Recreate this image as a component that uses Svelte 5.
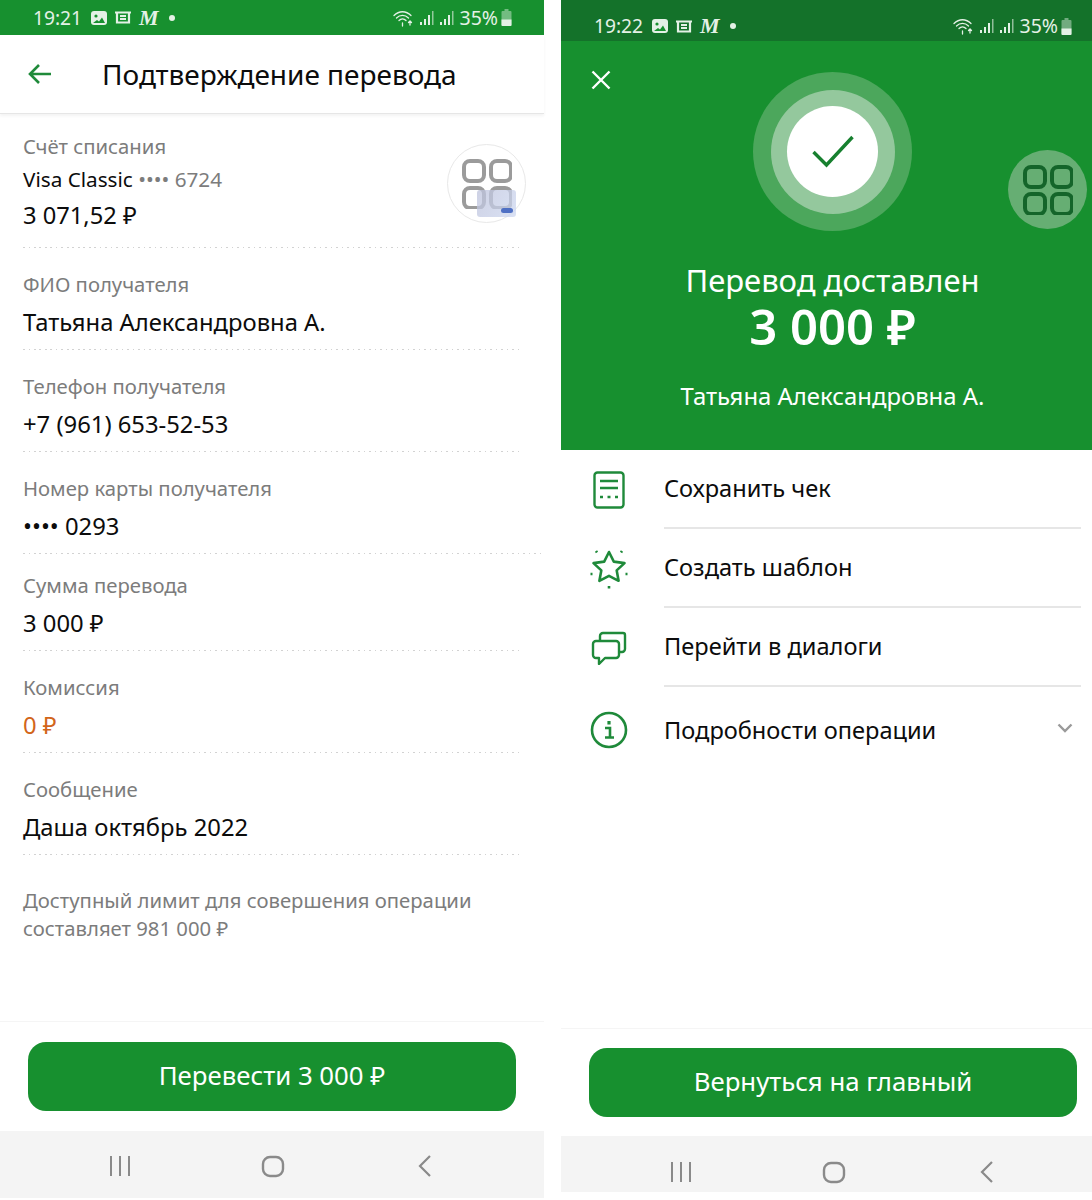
<script>
  const rows = [
    { label: "ФИО получателя", value: "Татьяна Александровна А." },
    { label: "Телефон получателя", value: "+7 (961) 653-52-53" },
    { label: "Номер карты получателя", value: "•••• 0293", wide: true },
    { label: "Сумма перевода", value: "3 000 ₽", tight: true },
    { label: "Комиссия", value: "0 ₽", accent: true },
    { label: "Сообщение", value: "Даша октябрь 2022" },
  ];

  const actions = ["Сохранить чек", "Создать шаблон", "Перейти в диалоги"];
</script>

{#snippet statusBar(time, dark)}
  <div class="status" class:dark>
    <div class="status-left">
      <span class="clock">{time}</span>
      <svg width="16" height="14" viewBox="0 0 16 14"><rect width="16" height="14" rx="3" fill="currentColor" /><circle cx="5" cy="5" r="1.6" fill="#17902f" /><path d="M2 12l4-3 2 1.500 3-4 3 5.500z" fill="#17902f" /></svg>
      <svg width="16" height="13" viewBox="0 0 16 13" class="news"><path d="M0 1.500h16M2 1.500v10h12v-10M5 5h6M5 8h6" fill="none" stroke="currentColor" stroke-width="2.200" /></svg>
      <span class="logo">M</span>
      <span class="dot"></span>
    </div>
    <div class="status-right">
      <svg width="23" height="18" viewBox="0 0 23 18" fill="none" stroke="currentColor" stroke-width="1.300" stroke-linecap="round"><path d="M1 6.500c5-5 12-5 17 0M3.500 9c3.500-3.400 8.500-3.400 12 0M6 11.500c2-2 5-2 7 0" /><path d="M9.500 14v3M9.500 14v.1M17 16v-4M15.500 13.500l1.500-1.500 1.500 1.500" /></svg>
      <svg width="17" height="16" viewBox="0 0 17 16" fill="currentColor"><rect x="1" y="12" width="2" height="3" /><rect x="5" y="9" width="2" height="6" /><rect x="9" y="5" width="2" height="10" /><rect x="13" y="1" width="1.500" height="14" opacity=".6" /></svg>
      <svg width="17" height="16" viewBox="0 0 17 16" fill="currentColor"><rect x="1" y="12" width="2" height="3" /><rect x="5" y="9" width="2" height="6" /><rect x="9" y="5" width="2" height="10" /><rect x="13" y="1" width="1.500" height="14" opacity=".6" /></svg>
      <span class="percent">35%</span>
      <svg width="11" height="17" viewBox="0 0 11 17"><path d="M3.500 0h4v2h2a1 1 0 0 1 1 1v13a1 1 0 0 1-1 1h-8a1 1 0 0 1-1-1V3a1 1 0 0 1 1-1h2z" fill="currentColor" opacity=".45" /><path d="M.5 10.500h10V16a1 1 0 0 1-1 1h-8a1 1 0 0 1-1-1z" fill="currentColor" /></svg>
    </div>
  </div>
{/snippet}

{#snippet navBar()}
  <div class="nav">
    <svg width="24" height="24" viewBox="0 0 24 24" fill="none" stroke="#8a8a8a" stroke-width="2"><path d="M3 2v20M12 2v20M21 2v20" /></svg>
    <svg width="24" height="24" viewBox="0 0 24 24" fill="none" stroke="#8a8a8a" stroke-width="2.400"><rect x="2" y="3" width="20" height="19" rx="7" /></svg>
    <svg width="24" height="24" viewBox="0 0 24 24" fill="none" stroke="#8a8a8a" stroke-width="2.200"><path d="M17 2L7 12l10 10" /></svg>
  </div>
{/snippet}

{#snippet gridIcon(color)}
  <svg width="50" height="50" viewBox="0 0 50 50" fill="none" stroke={color} stroke-width="4">
    <rect x="2" y="2" width="20" height="20" rx="6" />
    <rect x="29" y="2" width="20" height="20" rx="6" />
    <rect x="2" y="29" width="20" height="20" rx="6" />
    <rect x="29" y="29" width="20" height="20" rx="6" />
  </svg>
{/snippet}

<div class="page">
  <section class="phone left">
    {@render statusBar("19:21", false)}
    <header class="topbar">
      <svg class="back" width="26" height="24" viewBox="0 0 26 24" fill="none" stroke="#1f8a3a" stroke-width="2.600"><path d="M24 12H3M12 3l-9 9 9 9" /></svg>
      <h1>Подтверждение перевода</h1>
    </header>

    <div class="details">
      <div class="row first">
        <div class="label">Счёт списания</div>
        <div class="card">Visa Classic <span class="muted">•••• 6724</span></div>
        <div class="value balance">3 071,52 ₽</div>
        <div class="float-btn">
          {@render gridIcon("#9b9b9b")}
          <span class="card-chip"><span class="card-pill"></span></span>
        </div>
      </div>
      {#each rows as row}
        <div class="row" class:wide={row.wide} class:tight={row.tight}>
          <div class="label">{row.label}</div>
          <div class="value" class:accent={row.accent}>{row.value}</div>
        </div>
      {/each}
      <p class="limit">Доступный лимит для совершения операции<br />составляет 981 000 ₽</p>
    </div>

    <div class="footer">
      <button class="primary">Перевести 3 000 ₽</button>
    </div>
    {@render navBar()}
  </section>

  <section class="phone right">
    {@render statusBar("19:22", true)}
    <div class="hero">
      <svg class="close" width="20" height="20" viewBox="0 0 20 20" fill="none" stroke="#fff" stroke-width="2.400"><path d="M1.500 1.500l17 17M18.500 1.500l-17 17" /></svg>
      <div class="ring-outer">
        <div class="ring-mid">
          <div class="ring-inner">
            <svg width="42" height="34" viewBox="0 0 42 34" fill="none" stroke="#17802f" stroke-width="3.400"><path d="M1.500 17l13 13L40.500 2" /></svg>
          </div>
        </div>
      </div>
      <div class="float-btn on-green">{@render gridIcon("#14652a")}</div>
      <div class="hero-title">Перевод доставлен</div>
      <div class="hero-amount">3 000 ₽</div>
      <div class="hero-name">Татьяна Александровна А.</div>
    </div>

    <ul class="actions">
      {#each actions as action, i}
        <li class="action">
          <span class="action-icon">
            {#if i === 0}
              <svg width="32" height="38" viewBox="0 0 32 38" fill="none" stroke="#1f8a3a" stroke-width="2.400"><rect x="1.500" y="1.500" width="29" height="35" rx="3" /><path d="M7 10h18M7 17h18" /><path d="M7 26h3M14.500 26h3M22 26h3" /></svg>
            {:else if i === 1}
              <svg width="38" height="40" viewBox="0 0 38 40" fill="none" stroke="#1f8a3a" stroke-width="2.600" stroke-linejoin="round"><path d="M19 3l4.800 9.600 10.700 1.500-7.800 7.300 1.900 10.400-9.600-5-9.600 5 1.900-10.400-7.800-7.300 10.700-1.500z" /><path d="M6 2l1 1.500M32 2l-1 1.500M.5 25h2M35.500 25h2M19 37v2.500" /></svg>
            {:else}
              <svg width="36" height="34" viewBox="0 0 36 34" fill="none" stroke="#1f8a3a" stroke-width="2.400" stroke-linejoin="round"><path d="M2 13a3 3 0 0 1 3-3h20a3 3 0 0 1 3 3v11a3 3 0 0 1-3 3H14l-6 6v-6H5a3 3 0 0 1-3-3z" /><path d="M9 10V5a3 3 0 0 1 3-3h20a2 2 0 0 1 2 2v14a3 3 0 0 1-3 3h-3" /></svg>
            {/if}
          </span>
          <span class="action-text">{action}</span>
        </li>
      {/each}
      <li class="action last">
        <span class="action-icon">
          <svg width="38" height="38" viewBox="0 0 38 38" fill="none" stroke="#1f8a3a" stroke-width="2.600"><circle cx="19" cy="19" r="17" /><path d="M15 17h5v9M15 26.500h9" /><path d="M19 10v3.500" stroke-width="3.200" /></svg>
        </span>
        <span class="action-text">Подробности операции</span>
        <svg class="chevron" width="16" height="10" viewBox="0 0 16 10" fill="none" stroke="#9a9a9a" stroke-width="2.400"><path d="M1.500 1.500L8 8l6.500-6.500" /></svg>
      </li>
    </ul>

    <div class="footer">
      <button class="primary">Вернуться на главный</button>
    </div>
    {@render navBar()}
  </section>
</div>

<style>
  :global(body) {
    background: #fff;
  }

  .page {
    display: flex;
    gap: 17px;
    width: 1092px;
    height: 1200px;
    overflow: hidden;
    font-family: "Noto Sans", "Open Sans", sans-serif;
    color: #0c0c0c;
  }

  .phone {
    position: relative;
    display: flex;
    flex-direction: column;
    background: #fff;
  }

  .phone.left {
    width: 544px;
    height: 1198px;
  }

  .phone.right {
    width: 531px;
    height: 1192px;
  }

  .status {
    flex: none;
    display: flex;
    align-items: center;
    justify-content: space-between;
    height: 35px;
    padding: 0 32px 0 33px;
    background: #17902f;
    color: #e4f1e6;
  }

  .status.dark {
    height: 41px;
    padding: 11px 20px 0 33px;
    box-sizing: border-box;
    background: #14722a;
  }

  .status-left,
  .status-right {
    display: flex;
    align-items: center;
  }

  .status-left {
    gap: 8px;
  }

  .status-right {
    gap: 3px;
  }

  .clock,
  .percent {
    font-size: 19.500px;
    line-height: 24px;
  }

  .clock {
    margin-right: 1px;
    font-size: 19.200px;
  }

  .logo {
    font-family: "Liberation Serif", serif;
    font-size: 22px;
    line-height: 20px;
    font-weight: 700;
    font-style: italic;
  }

  .dot {
    width: 6px;
    height: 6px;
    margin-left: 2px;
    border-radius: 50%;
    background: currentColor;
  }

  .topbar {
    flex: none;
    display: flex;
    align-items: center;
    gap: 49px;
    height: 79px;
    padding-left: 27px;
    box-sizing: border-box;
    border-bottom: 1px solid #e6e6e6;
    box-shadow: 0 2px 3px rgba(0, 0, 0, 0.05);
  }

  .topbar h1 {
    margin: 0;
    font-size: 28px;
    line-height: 36px;
    font-weight: 400;
  }

  .details {
    position: relative;
    padding-top: 20px;
  }

  .row {
    position: relative;
    margin-left: 23px;
    width: 498px;
    padding: 24px 0 14px;
    background: repeating-linear-gradient(90deg, #d2d2d2 0 1.500px, transparent 1.500px 5.500px) bottom left / 100% 1px no-repeat;
  }

  .row.first {
    padding: 0 0 19px;
  }

  .row.wide {
    width: 521px;
  }

  .row.tight {
    padding-top: 19px;
  }

  .label {
    font-size: 20.300px;
    line-height: 24px;
    color: #7c7c7c;
  }

  .value {
    margin-top: 12px;
    font-size: 23.800px;
    line-height: 28px;
  }

  .value.accent {
    color: #d2651a;
  }

  .card {
    margin-top: 9px;
    font-size: 20.700px;
    line-height: 24px;
  }

  .muted {
    color: #7c7c7c;
  }

  .value.balance {
    margin-top: 10px;
    font-size: 23.700px;
  }

  .float-btn {
    position: absolute;
    display: flex;
    align-items: center;
    justify-content: center;
    width: 79px;
    height: 79px;
    box-sizing: border-box;
    border: 1px solid #e8e8e8;
    border-radius: 50%;
    background: #fff;
  }

  .row.first .float-btn {
    top: 10px;
    right: -5px;
  }

  .float-btn.on-green {
    top: 109px;
    right: 5px;
    border: 0;
    background: #66ae73;
  }

  .card-chip {
    position: absolute;
    left: 29px;
    top: 45px;
    width: 39px;
    height: 27px;
    border-radius: 3px;
    background: linear-gradient(120deg, rgba(190, 195, 220, 0.75), rgba(205, 215, 240, 0.75));
  }

  .card-pill {
    position: absolute;
    right: 3px;
    bottom: 4px;
    width: 12px;
    height: 5px;
    border-radius: 3px;
    background: #4f70c4;
  }

  .limit {
    margin: 31px 0 0 23px;
    font-size: 20.300px;
    line-height: 28px;
    color: #7c7c7c;
  }

  .footer {
    flex: none;
    margin-top: auto;
    padding: 20px 28px 20px;
    border-top: 1px solid #f5f5f5;
  }

  .primary {
    display: block;
    width: 488px;
    height: 69px;
    padding: 0 0 3px;
    border: 0;
    border-radius: 18px;
    background: #17902f;
    color: #fff;
    font: inherit;
    font-size: 25.800px;
  }

  .nav {
    flex: none;
    display: flex;
    align-items: center;
    justify-content: space-between;
    height: 67px;
    padding: 3px 107px 0 108px;
    box-sizing: border-box;
    background: #f4f4f4;
  }

  .right .nav {
    height: 56px;
    padding: 16px 93px 0 108px;
  }

  .right .footer {
    padding: 19px 15px 19px 28px;
  }

  .hero {
    position: relative;
    flex: none;
    display: flex;
    flex-direction: column;
    align-items: center;
    height: 409px;
    padding: 31px 0 0 12px;
    box-sizing: border-box;
    background: #17902f;
    color: #fff;
  }

  .close {
    position: absolute;
    left: 30px;
    top: 29px;
  }

  .ring-outer,
  .ring-mid,
  .ring-inner {
    display: flex;
    align-items: center;
    justify-content: center;
    border-radius: 50%;
  }

  .ring-outer {
    width: 159px;
    height: 159px;
    background: #4ca75c;
  }

  .ring-mid {
    width: 124px;
    height: 124px;
    background: #94c89d;
  }

  .ring-inner {
    width: 91px;
    height: 91px;
    background: #fff;
  }

  .hero-title {
    margin-top: 31px;
    font-size: 31px;
    line-height: 36px;
  }

  .hero-amount {
    margin-top: 1px;
    font-size: 49px;
    line-height: 54px;
    font-weight: 600;
  }

  .hero-name {
    margin-top: 27px;
    font-size: 23.900px;
    line-height: 32px;
  }

  .actions {
    margin: 0;
    padding: 0;
    list-style: none;
  }

  .action {
    position: relative;
    display: flex;
    align-items: center;
    height: 79px;
    margin-right: 11px;
    padding-bottom: 3px;
    box-sizing: border-box;
  }

  .action::after {
    content: "";
    position: absolute;
    left: 103px;
    right: 0;
    bottom: 0;
    height: 2px;
    background: #e6e6e6;
  }

  .action.last {
    height: 89px;
  }

  .action.last::after {
    display: none;
  }

  .action-icon {
    flex: none;
    display: flex;
    justify-content: center;
    width: 38px;
    margin: 0 36px 0 29px;
    padding-top: 4px;
  }

  .action.last .action-icon {
    padding-top: 0;
  }

  .action-text {
    font-size: 23.600px;
    line-height: 32px;
  }

  .chevron {
    position: absolute;
    right: 8px;
    top: 36px;
  }
</style>
